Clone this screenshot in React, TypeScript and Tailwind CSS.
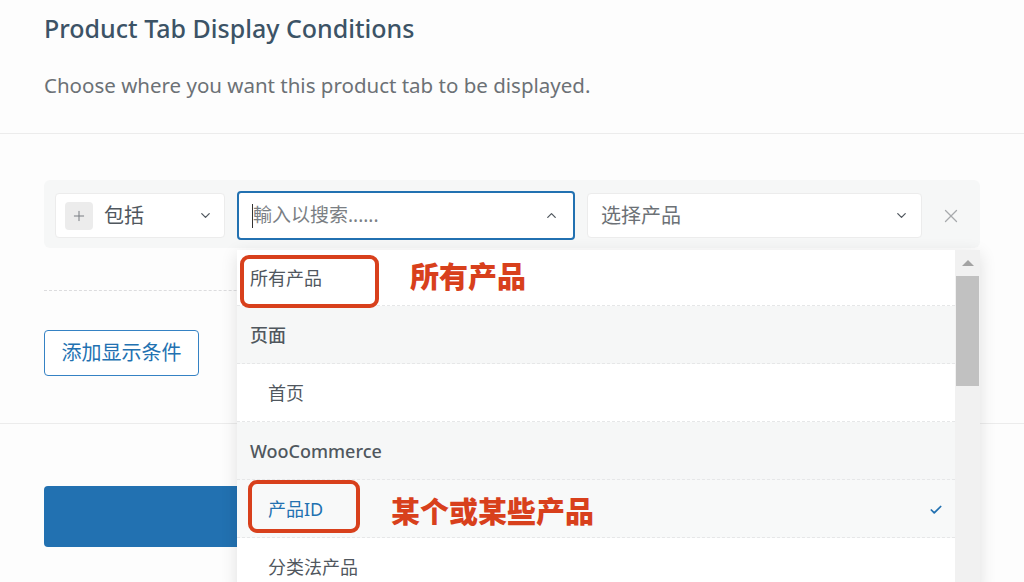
import { ChevronDown, ChevronUp, Plus, X, Check } from 'lucide-react';

type Option = {
  label: string;
  kind: 'item' | 'group' | 'selected';
  indent?: boolean;
  first?: boolean;
};

const options: Option[] = [
  { label: '所有产品', kind: 'item', first: true },
  { label: '页面', kind: 'group' },
  { label: '首页', kind: 'item', indent: true },
  { label: 'WooCommerce', kind: 'group' },
  { label: '产品ID', kind: 'selected', indent: true },
  { label: '分类法产品', kind: 'item', indent: true },
];

function OptionRow({ option }: { option: Option }) {
  const height = option.first ? 'h-[56px]' : 'h-[58px]';
  const pad = option.indent ? 'pl-[31px]' : 'pl-[13px]';
  if (option.kind === 'group') {
    return (
      <div
        className={`flex ${height} ${pad} items-center border-b border-dashed border-[#e6e7e8] bg-[#f6f7f7] pt-[2px] text-[18px] font-medium text-[#50575e]`}
      >
        {option.label}
      </div>
    );
  }
  if (option.kind === 'selected') {
    return (
      <div
        className={`flex ${height} ${pad} items-center justify-between border-b border-dashed border-[#e6e7e8] bg-[#f8f9f9] pt-[2px] pr-[12px] text-[18px] text-[#2271b1]`}
      >
        <span>{option.label}</span>
        <Check size={14} strokeWidth={3} className="text-[#2271b1]" />
      </div>
    );
  }
  return (
    <div
      className={`flex ${height} ${pad} items-center border-b border-dashed border-[#e6e7e8] bg-white pt-[2px] text-[18px] text-[#50575e]`}
    >
      {option.label}
    </div>
  );
}

export default function App() {
  return (
    <div className="relative h-[582px] w-[1024px] overflow-hidden bg-[#fdfdfd] font-['Noto_Sans','Noto_Sans_CJK_SC',sans-serif]">
      {/* Header */}
      <div className="h-[134px] border-b border-[#ececec] px-[44px] pt-[13px]">
        <h2 className="text-[25px] leading-[30px] font-medium text-[#3c5366]">
          Product Tab Display Conditions
        </h2>
        <p className="mt-[28px] text-[20.5px] leading-[28px] text-[#6c7176]">
          Choose where you want this product tab to be displayed.
        </p>
      </div>

      {/* Conditions */}
      <div className="border-b border-[#ececec] px-[44px] pt-[46px] pb-[47px]">
        <div className="flex h-[68px] items-center gap-[12px] rounded-md bg-[#f6f7f7] pt-[3px] pl-[11px]">
          <div className="flex h-[45px] w-[170px] items-center rounded border border-[#ececec] bg-white pr-[11px] pl-[9px] text-[20px] text-[#50575e]">
            <span className="flex h-[28px] w-[28px] items-center justify-center rounded-sm bg-[#ececec] text-[#787c82]">
              <Plus size={16} strokeWidth={1.5} />
            </span>
            <span className="ml-[11px] flex-1">包括</span>
            <ChevronDown size={15} strokeWidth={2} className="text-[#50575e]" />
          </div>
          <div className="flex h-[49px] w-[338px] items-center rounded border-2 border-[#2271b1] bg-white pr-[14px] pl-[13px] text-[19px]">
            <span className="h-[24px] w-px bg-[#333]" />
            <span className="flex-1 text-[#7b7f84]">輸入以搜索......</span>
            <ChevronUp size={15} strokeWidth={2} className="text-[#50575e]" />
          </div>
          <div className="flex h-[45px] w-[335px] items-center rounded border border-[#ececec] bg-white pr-[12px] pl-[13px] text-[20px] text-[#6c7176]">
            <span className="flex-1">选择产品</span>
            <ChevronDown size={15} strokeWidth={2} className="text-[#50575e]" />
          </div>
          <X size={22} strokeWidth={1.4} className="ml-[6px] text-[#a7aaad]" />
        </div>

        <div className="mt-[42px] border-t border-dashed border-[#dcdcde]" />

        <button className="mt-[39px] h-[46px] w-[155px] rounded border border-[#3582c4] bg-white text-[20px] text-[#2271b1]">
          添加显示条件
        </button>
      </div>

      {/* Save button (partly covered by the dropdown) */}
      <div className="px-[44px] pt-[62px]">
        <div className="h-[61px] w-[400px] rounded bg-[#2271b1]" />
      </div>

      {/* Dropdown */}
      <div className="absolute top-[250px] left-[237px] flex h-[340px] w-[743px] bg-white shadow-[0_4px_16px_rgba(0,0,0,0.12)]">
        <div className="flex-1">
          {options.map((option) => (
            <OptionRow key={option.label} option={option} />
          ))}
        </div>
        <div className="w-[25px] bg-[#f1f1f1]">
          <div className="flex h-[26px] items-center justify-center">
            <div className="h-0 w-0 border-x-[6px] border-b-[6px] border-x-transparent border-b-[#a3a3a3]" />
          </div>
          <div className="mx-auto h-[110px] w-[23px] bg-[#c1c1c1]" />
        </div>
      </div>

      {/* Annotations */}
      <div className="absolute top-[255px] left-[240px] h-[53px] w-[139px] rounded-[9px] border-[4px] border-[#d8401c]" />
      <div className="absolute top-[259px] left-[410px] text-[29px] leading-[36px] font-black text-[#d8401c]">
        所有产品
      </div>
      <div className="absolute top-[480px] left-[248px] h-[53px] w-[112px] rounded-[9px] border-[4px] border-[#d8401c]" />
      <div className="absolute top-[494px] left-[391px] text-[29px] leading-[36px] font-black text-[#d8401c]">
        某个或某些产品
      </div>
    </div>
  );
}
